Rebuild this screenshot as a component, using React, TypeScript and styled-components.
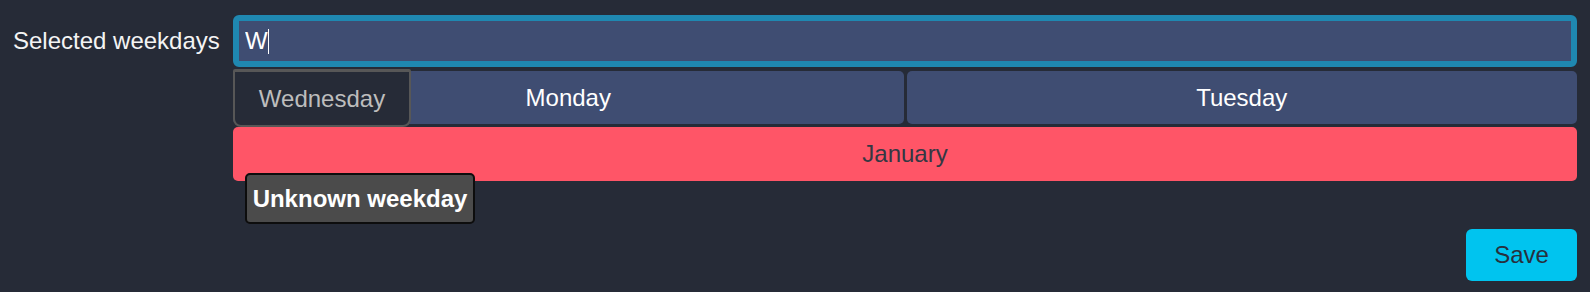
import React from "react";
import styled, { createGlobalStyle } from "styled-components";

const GlobalStyle = createGlobalStyle`
  html, body {
    margin: 0;
    padding: 0;
    background: #262b37;
  }
  body {
    font-family: "Liberation Sans", Arial, sans-serif;
    font-size: 24px;
    color: #ffffff;
  }
`;

const Page = styled.div`
  box-sizing: border-box;
  width: 1590px;
  height: 292px;
  padding: 15px 13px 0 12px;
  display: flex;
  flex-direction: column;
`;

const FormRow = styled.div`
  display: flex;
  align-items: flex-start;
`;

const Label = styled.label`
  flex: 0 0 221px;
  height: 52px;
  display: flex;
  align-items: center;
  font-size: 24px;
  color: #f4f4f4;
  padding-left: 1px;
  box-sizing: border-box;
`;

const Field = styled.div`
  position: relative;
  flex: 1;
  display: flex;
  flex-direction: column;
`;

const InputWrap = styled.div`
  position: relative;
`;

const TextInput = styled.input`
  box-sizing: border-box;
  width: 100%;
  height: 52px;
  margin: 0;
  padding: 0 6px;
  border: 6px solid #1f88b1;
  border-radius: 6px;
  background: #3f4d72;
  color: #ffffff;
  caret-color: transparent;
  font-family: "Liberation Sans", Arial, sans-serif;
  font-size: 24px;
  outline: none;
`;

const Caret = styled.span`
  position: absolute;
  left: 35px;
  top: 14px;
  width: 1px;
  height: 25px;
  background: #ffffff;
  pointer-events: none;
`;

const ChipArea = styled.div`
  position: relative;
  margin-top: 4px;
`;

const ChipGrid = styled.div`
  display: grid;
  grid-template-columns: 1fr 1fr;
  gap: 3px;
`;

const Chip = styled.div`
  height: 53px;
  display: flex;
  align-items: center;
  justify-content: center;
  background: #3f4d72;
  border-radius: 5px;
  color: #ffffff;
  font-size: 24px;
`;

const Suggestion = styled.div`
  position: absolute;
  top: -2px;
  left: 0;
  box-sizing: border-box;
  width: 178px;
  height: 58px;
  display: flex;
  align-items: center;
  justify-content: center;
  padding-top: 1px;
  background: #262b37;
  border: 2px solid #575757;
  border-top-width: 3px;
  border-radius: 2px 2px 8px 8px;
  color: #bdbdbd;
  font-size: 24px;
  z-index: 2;
`;

const ErrorBar = styled.div`
  margin-top: 3px;
  height: 54px;
  display: flex;
  align-items: center;
  justify-content: center;
  background: #ff5567;
  border-radius: 5px;
  color: #343843;
  font-size: 24px;
`;

const Tooltip = styled.div`
  position: absolute;
  left: 12px;
  top: 158px;
  box-sizing: border-box;
  width: 230px;
  height: 51px;
  display: flex;
  align-items: center;
  justify-content: center;
  background: #4b4b4b;
  border: 2px solid #0d0d0d;
  border-radius: 5px;
  color: #ffffff;
  font-weight: bold;
  font-size: 24px;
  z-index: 3;
`;

const Actions = styled.div`
  display: flex;
  justify-content: flex-end;
  margin-top: 48px;
`;

const SaveButton = styled.button`
  width: 111px;
  height: 52px;
  border: none;
  border-radius: 6px;
  background: #00c4ef;
  color: #27303d;
  font-family: "Liberation Sans", Arial, sans-serif;
  font-size: 24px;
  padding: 0;
`;

export default function App() {
  return (
    <>
      <GlobalStyle />
      <Page>
        <FormRow>
          <Label htmlFor="weekdays">Selected weekdays</Label>
          <Field>
            <InputWrap>
              <TextInput id="weekdays" defaultValue="W" autoFocus />
              <Caret />
            </InputWrap>
            <ChipArea>
              <ChipGrid>
                <Chip>Monday</Chip>
                <Chip>Tuesday</Chip>
              </ChipGrid>
              <Suggestion>Wednesday</Suggestion>
            </ChipArea>
            <ErrorBar>January</ErrorBar>
            <Tooltip>Unknown weekday</Tooltip>
          </Field>
        </FormRow>
        <Actions>
          <SaveButton>Save</SaveButton>
        </Actions>
      </Page>
    </>
  );
}
